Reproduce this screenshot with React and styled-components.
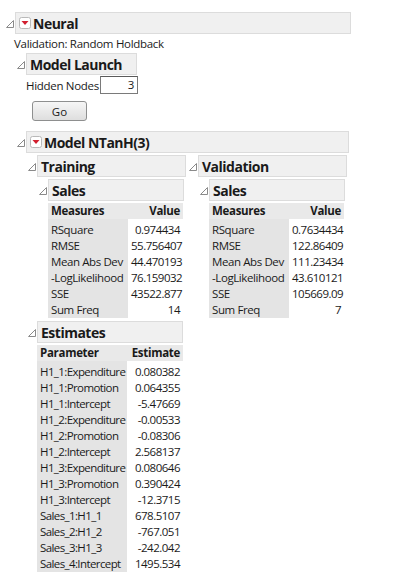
import styled, { createGlobalStyle } from 'styled-components'

const Global = createGlobalStyle`
    body {
        margin: 0;
        background: #ffffff;
        font-family: 'Open Sans', 'Noto Sans', sans-serif;
        color: #1a1a1a;
    }
`

const Page = styled.div`
    padding: 12px 0 0 4px;
    width: 414px;
    box-sizing: border-box;
`

const Node = styled.div`
    display: flex;
    flex-direction: column;
    margin-top: ${p => p.mt || 0}px;
`

const HeadRow = styled.div`
    display: flex;
    align-items: center;
`

const Toggle = styled.span`
    width: 11px;
    flex: none;
    display: flex;
    align-items: center;
    justify-content: center;
    padding-top: 2px;
`

const HeadBox = styled.div`
    display: flex;
    align-items: center;
    gap: 2px;
    height: 22px;
    width: ${p => p.width}px;
    box-sizing: border-box;
    padding: 0 3px;
    background: #f0f0f0;
    border: 1px solid #dcdcdc;
    font-weight: 700;
    font-size: 14px;
    letter-spacing: -0.5px;
    white-space: nowrap;
`

const Children = styled.div`
    display: flex;
    flex-direction: column;
    padding-left: 11px;
    padding-top: ${p => p.top ?? 2}px;
    gap: ${p => p.gap ?? 2}px;
`

const Note = styled.div`
    font-size: 11.5px;
    line-height: 18px;
    margin-left: -1px;
    letter-spacing: -0.3px;
`

const Columns = styled.div`
    display: flex;
    gap: 1px;
`

const FieldRow = styled.div`
    display: flex;
    align-items: center;
    font-size: 11.5px;
    letter-spacing: -0.3px;
    height: 18px;
`

const NumInput = styled.div`
    width: 38px;
    height: 18px;
    box-sizing: border-box;
    border: 1px solid #7a7a7a;
    border-top-color: #5a5a5a;
    text-align: right;
    padding-right: 3px;
    line-height: 16px;
    margin-left: 1px;
    background: #fff;
`

const GoButton = styled.div`
    width: 55px;
    height: 20px;
    box-sizing: border-box;
    margin: 7px 0 10px 6px;
    border: 1px solid #8e8f8f;
    border-radius: 3px;
    background: linear-gradient(#f6f6f6, #dedede);
    font-size: 11.5px;
    display: flex;
    align-items: center;
    justify-content: center;
`

const Table = styled.table`
    border-collapse: collapse;
    table-layout: fixed;
    font-size: 11.5px;
    width: ${p => p.width}px;

    th {
        background: #e9e9e9;
        font-weight: 700;
        letter-spacing: -0.3px;
        height: 15px;
        padding: 0 3px 1px;
        text-align: left;
        line-height: 14px;
        white-space: nowrap;
    }
    th:first-child {
        width: ${p => p.left}px;
    }
    th:last-child {
        text-align: right;
    }
    td {
        height: 16px;
        line-height: 16px;
        padding: 0 3px;
        white-space: nowrap;
    }
    td:first-child {
        background: #e4e4e4;
        letter-spacing: ${p => p.ls}px;
    }
    td:last-child {
        text-align: right;
        letter-spacing: -0.5px;
    }
    tbody tr:first-child td {
        padding-top: 3px;
    }
`

const TriangleIcon = () => (
    <svg width="8" height="8" viewBox="0 0 8 8">
        <path d="M0.5 7.5 L7.5 7.5 L7.5 0.5 Z" fill="none" stroke="#8a8a8a" strokeWidth="1" />
    </svg>
)

const RedMenu = () => (
    <svg width="12" height="12" viewBox="0 0 12 12" style={{ flex: 'none' }}>
        <rect x="0.5" y="0.5" width="11" height="11" rx="2" fill="#fff" stroke="#b9b9b9" />
        <path d="M2.5 4 L9.5 4 L6 8 Z" fill="#d21f2f" />
    </svg>
)

const Outline = ({ title, width, menu, children, top, gap, mt }) => (
    <Node mt={mt}>
        <HeadRow>
            <Toggle><TriangleIcon /></Toggle>
            <HeadBox width={width}>
                {menu && <RedMenu />}
                {title}
            </HeadBox>
        </HeadRow>
        {children && <Children top={top} gap={gap}>{children}</Children>}
    </Node>
)

const FitTable = ({ rows, width, left, head, ls }) => (
    <Table width={width} left={left} ls={ls}>
        <thead>
            <tr><th>{head[0]}</th><th>{head[1]}</th></tr>
        </thead>
        <tbody>
            {rows.map(r => (
                <tr key={r[0]}><td>{r[0]}</td><td>{r[1]}</td></tr>
            ))}
        </tbody>
    </Table>
)

const training = [
    ['RSquare', '0.974434'],
    ['RMSE', '55.756407'],
    ['Mean Abs Dev', '44.470193'],
    ['-LogLikelihood', '76.159032'],
    ['SSE', '43522.877'],
    ['Sum Freq', '14'],
]

const validation = [
    ['RSquare', '0.7634434'],
    ['RMSE', '122.86409'],
    ['Mean Abs Dev', '111.23434'],
    ['-LogLikelihood', '43.610121'],
    ['SSE', '105669.09'],
    ['Sum Freq', '7'],
]

const estimates = [
    ['H1_1:Expenditure', '0.080382'],
    ['H1_1:Promotion', '0.064355'],
    ['H1_1:Intercept', '-5.47669'],
    ['H1_2:Expenditure', '-0.00533'],
    ['H1_2:Promotion', '-0.08306'],
    ['H1_2:Intercept', '2.568137'],
    ['H1_3:Expenditure', '0.080646'],
    ['H1_3:Promotion', '0.390424'],
    ['H1_3:Intercept', '-12.3715'],
    ['Sales_1:H1_1', '678.5107'],
    ['Sales_2:H1_2', '-767.051'],
    ['Sales_3:H1_3', '-242.042'],
    ['Sales_4:Intercept', '1495.534'],
]

const App = () => (
    <Page>
        <Global />
        <Outline title="Neural" width={336} menu top={1} gap={0}>
            <Note>Validation: Random Holdback</Note>
            <Outline title="Model Launch" width={111} top={1} gap={0}>
                <FieldRow>Hidden Nodes<NumInput>3</NumInput></FieldRow>
                <GoButton>Go</GoButton>
            </Outline>
            <Outline title="Model NTanH(3)" width={323} menu>
                <Columns>
                    <Outline title="Training" width={149}>
                        <Outline title="Sales" width={136} gap={0}>
                            <FitTable head={['Measures', 'Value']} rows={training} width={135} left={74} ls={-0.4} />
                        </Outline>
                    </Outline>
                    <Outline title="Validation" width={149}>
                        <Outline title="Sales" width={136} gap={0}>
                            <FitTable head={['Measures', 'Value']} rows={validation} width={135} left={74} ls={-0.4} />
                        </Outline>
                    </Outline>
                </Columns>
                <Outline title="Estimates" width={146} gap={0} mt={1}>
                    <FitTable head={['Parameter', 'Estimate']} rows={estimates} width={146} left={84} ls={-0.6} />
                </Outline>
            </Outline>
        </Outline>
    </Page>
)

export default App
